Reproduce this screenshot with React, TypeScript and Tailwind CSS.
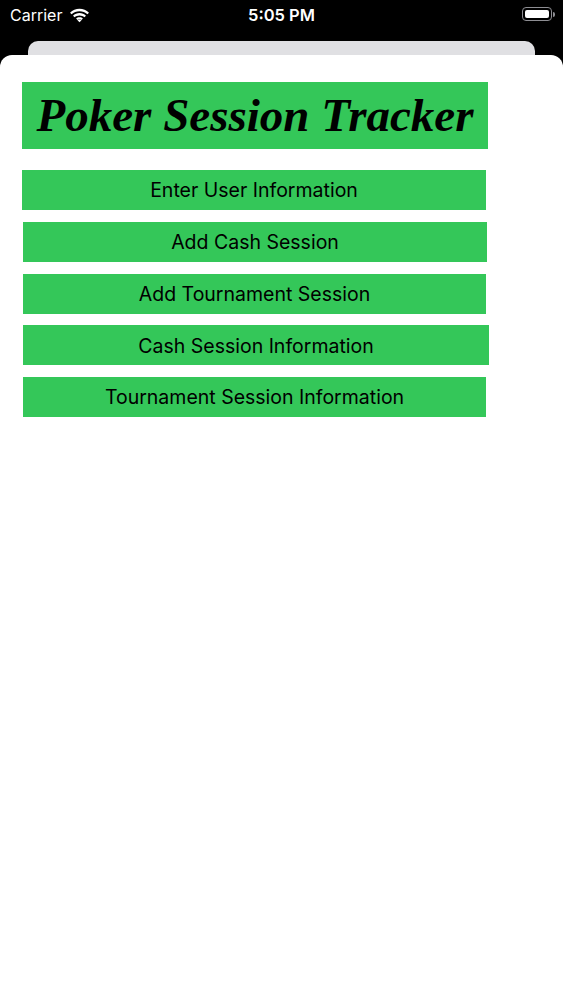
import React from 'react';

const buttons = [
  {label: 'Enter User Information', cls: 'ml-[22px] w-[464px]'},
  {label: 'Add Cash Session', cls: 'ml-[23px] w-[464px]'},
  {label: 'Add Tournament Session', cls: 'ml-[23px] w-[463px]'},
  {label: 'Cash Session Information', cls: 'ml-[23px] w-[466px]'},
  {label: 'Tournament Session Information', cls: 'ml-[23px] w-[463px]'},
];

function Wifi() {
  return (
    <svg width="21" height="15" viewBox="0 0 21 15" className="ml-[7px]">
      <path d="M10.5 3.2c3 0 5.8 1.1 7.9 3.1l1.6-1.6C17.4 2.2 14.1.8 10.5.8S3.6 2.2 1 4.7l1.6 1.6c2.1-2 4.9-3.1 7.9-3.1z" fill="white" />
      <path d="M10.5 7.4c1.9 0 3.6.7 4.9 1.9l1.6-1.6c-1.7-1.6-4-2.6-6.5-2.6S5.7 6.1 4 7.7l1.6 1.6c1.3-1.2 3-1.9 4.9-1.9z" fill="white" />
      <path d="M10.5 11.4c.8 0 1.5.3 2 .8l-2 2.1-2-2.1c.5-.5 1.2-.8 2-.8z" fill="white" />
      <path d="M10.5 9.3c1.4 0 2.6.5 3.4 1.3l-1.4 1.5c-.5-.5-1.2-.8-2-.8s-1.5.3-2 .8L7.1 10.6c.8-.8 2-1.3 3.4-1.3z" fill="white" />
    </svg>
  );
}

function Battery() {
  return (
    <div className="flex items-center">
      <div className="h-[14px] w-[30px] rounded-[4px] border border-[#8e8e93] p-[2px]">
        <div className="h-full w-full rounded-[2px] bg-white" />
      </div>
      <div className="ml-[1px] h-[5px] w-[2px] rounded-r-sm bg-[#8e8e93]" />
    </div>
  );
}

export default function App() {
  return (
    <div className="flex h-[1000px] w-[563px] flex-col overflow-hidden bg-black font-['Inter','Liberation_Sans',sans-serif]">
      <div className="relative flex h-[41px] items-start px-[10px] pt-[4px] text-white">
        <div className="flex items-center text-[16px] leading-[22px]">
          Carrier
          <Wifi />
        </div>
        <div className="absolute left-0 right-0 top-[4px] text-center text-[16.5px] font-semibold leading-[22px]">
          5:05 PM
        </div>
        <div className="ml-auto mr-[-2px] mt-[3px]">
          <Battery />
        </div>
      </div>
      <div className="mx-[28px] h-[14px] rounded-t-[10px] bg-[#e0e0e3]" />
      <div className="flex-1 rounded-t-[12px] bg-white pt-[27px]">
        <div className="ml-[22px] flex h-[67px] w-[466px] items-center justify-center bg-[#34c759]">
          <h1 className="font-['Liberation_Serif','Times_New_Roman',serif] text-[47px] font-bold italic leading-none text-black">
            Poker Session Tracker
          </h1>
        </div>
        <div className="mt-[21px] flex flex-col gap-[11.75px]">
          {buttons.map((b) => (
            <button
              key={b.label}
              className={`${b.cls} flex h-[40px] items-center justify-center bg-[#34c759] pt-[2px] text-[19.5px] text-black`}
            >
              {b.label}
            </button>
          ))}
        </div>
      </div>
    </div>
  );
}
